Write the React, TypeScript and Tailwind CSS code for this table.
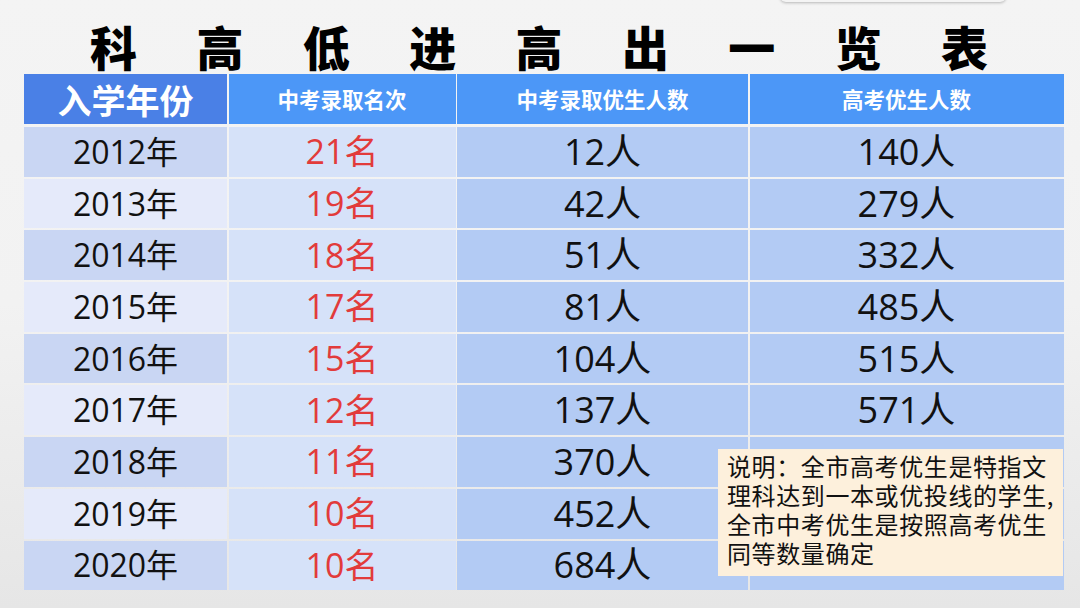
const rows = [
  ["2012年", "21名", "12人", "140人"],
  ["2013年", "19名", "42人", "279人"],
  ["2014年", "18名", "51人", "332人"],
  ["2015年", "17名", "81人", "485人"],
  ["2016年", "15名", "104人", "515人"],
  ["2017年", "12名", "137人", "571人"],
  ["2018年", "11名", "370人", ""],
  ["2019年", "10名", "452人", ""],
  ["2020年", "10名", "684人", ""],
];

const title = ["科", "高", "低", "进", "高", "出", "一", "览", "表"];

export default function App() {
  return (
    <div
      className="relative w-[1080px] h-[608px] overflow-hidden bg-gradient-to-b from-[#f4f4f4] via-[#f2f2f2] to-[#e6e6e6]"
      style={{ fontFamily: '"Noto Sans CJK SC", "Noto Sans", sans-serif' }}
    >
      <div className="absolute left-[780px] top-[-20px] w-[226px] h-[22px] rounded-b-md bg-[#f4f4f4] shadow-[0_1px_3px_rgba(0,0,0,0.25)]" />

      <div className="pt-[21px] pl-[90px]">
        <div className="flex justify-between w-[898px] text-[47px] leading-[49px] font-black text-black">
          {title.map((c, i) => (
            <span key={i}>{c}</span>
          ))}
        </div>
      </div>

      <div className="relative mt-[4px] ml-[24px] w-[1039px]">
        <div className="grid grid-cols-[203px_227px_291px_314px] gap-x-[1.5px] text-white font-bold">
          <div className="h-[50px] bg-[#4a80e6] flex items-center justify-center text-[34px]">入学年份</div>
          <div className="h-[50px] bg-[#4c97f7] flex items-center justify-center text-[21.5px]">中考录取名次</div>
          <div className="h-[50px] bg-[#4c97f7] flex items-center justify-center text-[21.5px]">中考录取优生人数</div>
          <div className="h-[50px] bg-[#4c97f7] flex items-center justify-center text-[21.5px]">高考优生人数</div>
        </div>
        <div
          className="grid grid-cols-[203px_227px_291px_314px] gap-x-[1.5px] gap-y-[2px] mt-[3px]"
          style={{ fontFamily: '"Open Sans", "Noto Sans CJK SC", sans-serif' }}
        >
          {rows.map((r, i) => (
            <div key={i} className="contents">
              <div
                className={`h-[49.7px] flex items-center justify-center text-[32px] text-[#111] ${
                  i % 2 === 0 ? "bg-[#c9d6f3]" : "bg-[#e5eafa]"
                }`}
              >
                {r[0]}
              </div>
              <div className="h-[49.7px] bg-[#d6e2f9] flex items-center justify-center text-[34px] text-[#e23b3b]">
                {r[1]}
              </div>
              <div className="h-[49.7px] bg-[#b3cbf4] flex items-center justify-center text-[36px] text-[#111]">
                {r[2]}
              </div>
              <div className="h-[49.7px] bg-[#b3cbf4] flex items-center justify-center text-[36px] text-[#111]">
                {r[3]}
              </div>
            </div>
          ))}
        </div>

        <div className="absolute left-[694px] top-[375px] w-[345px] h-[127px] bg-[#fdf0dc] pl-[9px] pt-[2px] text-[24px] leading-[29px] text-[#111] tracking-[0.6px] whitespace-nowrap">
          <div>说明：全市高考优生是特指文</div>
          <div>理科达到一本或优投线的学生,</div>
          <div>全市中考优生是按照高考优生</div>
          <div>同等数量确定</div>
        </div>
      </div>
    </div>
  );
}
